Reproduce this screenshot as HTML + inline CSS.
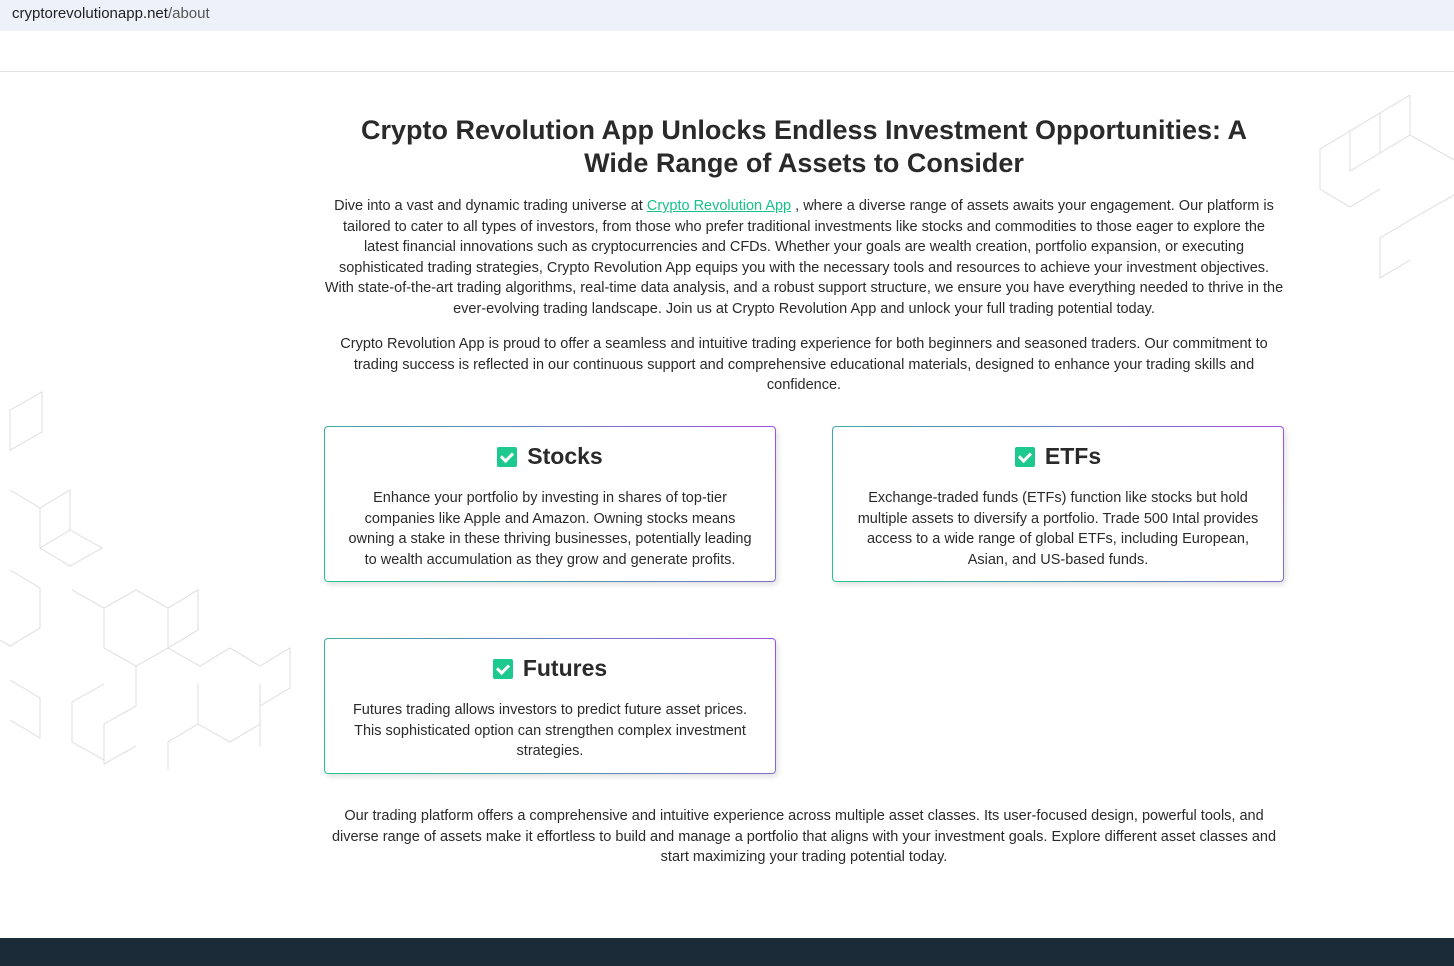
<!DOCTYPE html>
<html><head><meta charset="utf-8"><style>
*{margin:0;padding:0;box-sizing:border-box}
body{width:1454px;height:966px;overflow:hidden;background:#fff;font-family:"Liberation Sans",sans-serif;color:#222;position:relative}
.url{height:31px;background:#edf1fa;font-size:15px;line-height:28px;padding-left:12px;color:#222}
.url span{color:#555}
.hdr{height:41px;border-bottom:1px solid #e2e2e2}
.main{position:absolute;left:324px;top:114px;width:960px;text-align:center}
h1{font-size:27px;line-height:33px;font-weight:bold;color:#2a2a2a;margin:0 25px 16px}
p{font-size:14.5px;line-height:20.5px;color:#2a2a2a}
a{color:#18c08a}
.card{position:absolute;width:452px;border-radius:4px;padding:1px;background:linear-gradient(45deg,#1ec98f,#a050e0);box-shadow:2px 3px 6px rgba(0,0,0,.12)}
.in{background:#fff;border-radius:3px;text-align:center;padding:14px 18px 11px}
.in h3{font-size:23px;line-height:30px;font-weight:bold;color:#2a2a2a;margin-bottom:17px}
.ck{display:inline-block;width:20px;height:20px;background:#1ec98f;border-radius:2px;vertical-align:-3px;margin-right:10px;position:relative}
.ck:after{content:"";position:absolute;left:6px;top:3px;width:5px;height:9px;border:solid #fff;border-width:0 3px 3px 0;transform:rotate(45deg)}
.foot{position:absolute;left:0;top:938px;width:1454px;height:28px;background:#1b2b38}
</style></head><body>
<div class="url">cryptorevolutionapp.net<span>/about</span></div>
<div class="hdr"></div>
<svg style="position:absolute;left:0;top:390px" width="300" height="380" stroke="#ddd" fill="none" stroke-width="1">
<path d="M10 20l32-18v40l-32 18zM10 100l30 18v40M40 118l30-18v40l-30 18M40 158l30 18 32-18-32-18M10 180l30 18v40l-30 18-10-6M72 200l32 18 32-18 32 18 30-18v40l-30 18M104 218v40l32 18 32-18v-40M136 276v40l-32 18v40l32-18M104 294l-32 18v40l32 18M168 258l32 18 30-18 30 18 30-18v40l-30 18v40M198 294v40l32 18 30-18v-40M198 334l-30 18v40M10 290l30 18v40l-30-18"/>
</svg>
<svg style="position:absolute;left:1310px;top:90px" width="144" height="190" stroke="#ddd" fill="none">
<path d="M100 5l-30 18-30 18v40l30-18V23M40 41l-30 18v40l30 18 30-18M100 5v40l44 25M70 63l30-18M100 130l-30 18v40l30-18M100 130l44-25"/>
</svg>
<div class="main">
<h1>Crypto Revolution App Unlocks Endless Investment Opportunities: A Wide Range of Assets to Consider</h1>
<p>Dive into a vast and dynamic trading universe at <a href="#">Crypto Revolution App</a> , where a diverse range of assets awaits your engagement. Our platform is tailored to cater to all types of investors, from those who prefer traditional investments like stocks and commodities to those eager to explore the latest financial innovations such as cryptocurrencies and CFDs. Whether your goals are wealth creation, portfolio expansion, or executing sophisticated trading strategies, Crypto Revolution App equips you with the necessary tools and resources to achieve your investment objectives. With state-of-the-art trading algorithms, real-time data analysis, and a robust support structure, we ensure you have everything needed to thrive in the ever-evolving trading landscape. Join us at Crypto Revolution App and unlock your full trading potential today.</p>
<p style="margin-top:15px">Crypto Revolution App is proud to offer a seamless and intuitive trading experience for both beginners and seasoned traders. Our commitment to trading success is reflected in our continuous support and comprehensive educational materials, designed to enhance your trading skills and confidence.</p>
</div>
<div class="card" style="left:324px;top:426px"><div class="in"><h3><span class="ck"></span>Stocks</h3><p>Enhance your portfolio by investing in shares of top-tier companies like Apple and Amazon. Owning stocks means owning a stake in these thriving businesses, potentially leading to wealth accumulation as they grow and generate profits.</p></div></div>
<div class="card" style="left:832px;top:426px"><div class="in"><h3><span class="ck"></span>ETFs</h3><p>Exchange-traded funds (ETFs) function like stocks but hold multiple assets to diversify a portfolio. Trade 500 Intal provides access to a wide range of global ETFs, including European, Asian, and US-based funds.</p></div></div>
<div class="card" style="left:324px;top:638px"><div class="in"><h3><span class="ck"></span>Futures</h3><p>Futures trading allows investors to predict future asset prices. This sophisticated option can strengthen complex investment strategies.</p></div></div>
<p style="position:absolute;left:324px;top:806px;width:960px;text-align:center">Our trading platform offers a comprehensive and intuitive experience across multiple asset classes. Its user-focused design, powerful tools, and diverse range of assets make it effortless to build and manage a portfolio that aligns with your investment goals. Explore different asset classes and start maximizing your trading potential today.</p>
<div class="foot"></div>
</body></html>
